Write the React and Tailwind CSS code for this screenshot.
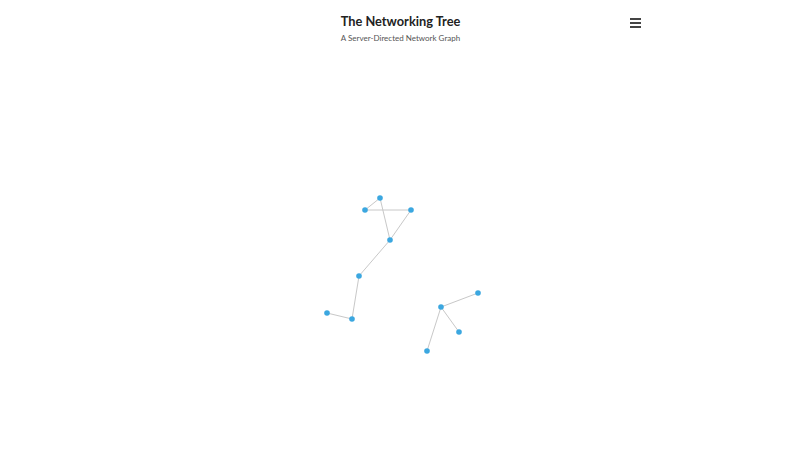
const nodes = [
  [380, 198],
  [365, 210],
  [411, 210],
  [390, 240],
  [359, 276],
  [352, 319],
  [327, 313],
  [441, 307],
  [478, 293],
  [459, 332],
  [427, 351],
];

const links = [
  [0, 1],
  [0, 3],
  [1, 2],
  [2, 3],
  [3, 4],
  [4, 5],
  [5, 6],
  [7, 8],
  [7, 9],
  [7, 10],
];

function Graph() {
  return (
    <svg className="absolute inset-0" width="800" height="450" viewBox="0 0 800 450">
      {links.map(([a, b], i) => (
        <line
          key={i}
          x1={nodes[a][0]}
          y1={nodes[a][1]}
          x2={nodes[b][0]}
          y2={nodes[b][1]}
          stroke="#c8c8c8"
          strokeWidth="1"
        />
      ))}
      {nodes.map(([x, y], i) => (
        <circle key={i} cx={x} cy={y} r="2.8" fill="#3ba7e0" />
      ))}
    </svg>
  );
}

export default function App() {
  return (
    <div className="relative w-[800px] h-[450px] bg-white overflow-hidden font-['Lato',sans-serif]">
      <Graph />
      <header className="relative flex items-start justify-between w-[482px] mx-auto pt-[12px]">
        <div className="w-[12px]" />
        <div className="flex flex-col items-center">
          <h1 className="text-[12.8px] leading-[18px] font-bold text-[#222]">
            The Networking Tree
          </h1>
          <p className="text-[8px] leading-[12px] mt-[2px] text-[#555]">
            A Server-Directed Network Graph
          </p>
        </div>
        <button className="flex flex-col gap-[2px] mt-[6px] w-[11px]">
          <span className="block h-[2px] w-full bg-[#444]" />
          <span className="block h-[2px] w-full bg-[#444]" />
          <span className="block h-[2px] w-full bg-[#444]" />
        </button>
      </header>
    </div>
  );
}
